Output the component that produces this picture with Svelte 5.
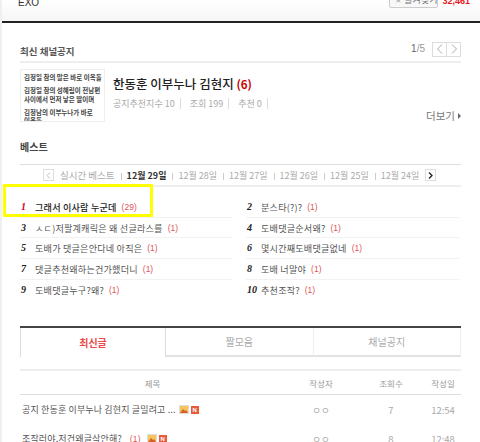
<script>
  const tabs = ['12월 28일','12월 27일','12월 26일','12월 25일','12월 24일'];
  const best = [
    [1,'그래서 이사람 누군데','(29)'],[2,'분스타(?)?','(1)'],
    [3,'ㅅㄷ)저팔계캐릭은 왜 선글라스를','(1)'],[4,'도배댓글순서왜?','(1)'],
    [5,'도배가 댓글은안다네 아직은','(1)'],[6,'몇시간째도배댓글없네','(1)'],
    [7,'댓글추천왜하는건가했더니','(1)'],[8,'도배 너말야','(1)'],
    [9,'도배댓글누구?왜?','(1)'],[10,'추천조작?','(1)']
  ];
  const rows = [
    {t:'공지 한동훈 이부누나 김현지 글밀려고 ...',c:'',u:'ㅇㅇ',v:'7',d:'12:54'},
    {t:'조작러야,저건왜글삭안해?',c:'(1)',u:'ㅇㅇ',v:'8',d:'12:48'}
  ];
</script>

<div class="page">
  <header class="top">
    <span class="exo">EXO</span>
    <div class="fav">
      <button class="star"><svg width="10" height="10" viewBox="0 0 10 10"><path d="M5 0l1.400 3.200 3.400.3-2.600 2.200.8 3.300L5 7.300 2 9l.8-3.300L.2 3.500l3.400-.3z" fill="#bbb"/></svg><span>즐겨찾기</span></button>
      <b>32,461</b>
    </div>
  </header>

  <main class="content">
    <section class="notice">
      <div class="head">
        <h2>최신 채널공지</h2>
        <div class="pager">
          <span class="count"><b>1</b>/5</span>
          <div class="arrows">
            <span><svg width="8" height="10" viewBox="0 0 8 10"><path d="M6 .5L1.500 5 6 9.500" fill="none" stroke="#aaa"/></svg></span>
            <span><svg width="8" height="10" viewBox="0 0 8 10"><path d="M2 .5L6.500 5 2 9.500" fill="none" stroke="#aaa"/></svg></span>
          </div>
        </div>
      </div>
      <div class="card">
        <div class="thumb">
          <p>김정일 참의 말은 바로 이옥돌</p>
          <p>김정일 참의 성혜림이 전남편<br>사이에서 먼저 낳은 딸이며</p>
          <p>김정남의 이부누나가 바로<br>이옥돌</p>
        </div>
        <div class="info">
          <div class="title">한동훈 이부누나 김현지 <b>(6)</b></div>
          <div class="meta"><span>공지추천지수 10</span><span>조회 199</span><span>추천 0</span></div>
        </div>
      </div>
      <div class="more">더보기<i></i></div>
    </section>

    <section class="best">
      <h3>베스트</h3>
      <nav class="days">
        <span class="sq"><svg width="5" height="7" viewBox="0 0 5 7"><path d="M4 .5L1 3.500 4 6.500" fill="none" stroke="#bbb"/></svg></span>
        <span class="day">실시간 베스트</span>
        <span class="day on">12월 29일</span>
        {#each tabs as t}<span class="day date">{t}</span>{/each}
        <span class="sq dark"><svg width="5" height="7" viewBox="0 0 5 7"><path d="M1 .5L4 3.500 1 6.500" fill="none" stroke="#222" stroke-width="1.300"/></svg></span>
      </nav>
      <ol class="list">
        {#each best as [n,t,c]}
          <li class:first={n===1}><em>{n}</em><span class="txt">{t}</span><span class="cm">{c}</span></li>
        {/each}
      </ol>
      <div class="mark"></div>
    </section>

    <section class="board">
      <div class="btabs">
        <div class="btab active">최신글</div>
        <div class="btab">짤모음</div>
        <div class="btab">채널공지</div>
      </div>
      <div class="thead">
        <span class="c1">제목</span><span class="c2">작성자</span><span class="c3">조회수</span><span class="c4">작성일</span>
      </div>
      {#each rows as r}
        <div class="row">
          <span class="c1 subject">{r.t}{#if r.c}<span class="cm rc">{r.c}</span>{/if}
            <svg class="ic" width="10" height="9" viewBox="0 0 10 9"><rect width="10" height="9" fill="#ddd"/><rect x="1" y="1" width="8" height="7" fill="#f6c65a"/><path d="M1 8l3-4 2 2 1-1 2 3z" fill="#d2632a"/></svg>
            <span class="new">N</span>
          </span>
          <span class="c2">ㅇㅇ</span><span class="c3">{r.v}</span><span class="c4">{r.d}</span>
        </div>
      {/each}
    </section>
  </main>
</div>

<style>
  :global(body) { margin: 0; background: #fff; }
  .page {
    width: 480px; height: 442px; overflow: hidden; box-sizing: border-box;
    border-left: 2px solid #f0f0f0;
    font-family: "Noto Sans CJK KR", "Noto Sans", sans-serif;
    font-size: 10px; color: #555;
  }
  .top {
    height: 21px; box-sizing: content-box; border-bottom: 2px solid #222;
    display: flex; justify-content: space-between; align-items: flex-start;
    padding: 0 10px 0 16px;
    background: linear-gradient(#fff, #f6f6f6);
  }
  .exo { font: 10px/1 "Liberation Sans", sans-serif; color: #333; margin-top: -2px; }
  .fav { display: flex; gap: 4px; margin-top: -9px; align-items: center; }
  .star {
    display: flex; align-items: center; gap: 2px; width: 49px; height: 17px; padding: 0 0 0 5px; box-sizing: border-box;
    border: 1px solid #ccc; border-radius: 2px; background: #f8f8f8; white-space: nowrap;
    font: 9px/1 "Noto Sans CJK KR", sans-serif; color: #777;
  }
  .fav b { color: #e8141c; font: bold 9px/1 "Liberation Sans", sans-serif; margin-top: 3px; }

  .content { padding: 0 19px 0 18px; }
  .head {
    margin-top: 17px; height: 21px; border-bottom: 2px solid #eee;
    display: flex; justify-content: space-between; align-items: center;
  }
  h2 { margin: 0; font-size: 9.500px; font-weight: 700; line-height: 16px; color: #555; padding-top: 1px; }
  .pager { display: flex; align-items: center; gap: 7px; margin-top: -3px; }
  .count { font: 10px/1 "Liberation Sans", sans-serif; color: #999; }
  .count b { color: #666; font-weight: 400; }
  .arrows { display: flex; border: 1px solid #ddd; }
  .arrows span { width: 13px; height: 13px; display: flex; align-items: center; justify-content: center; }
  .arrows span + span { border-left: 1px solid #ddd; }

  .card { display: flex; gap: 8px; margin-top: 6px; }
  .thumb {
    width: 85px; height: 53px; overflow: hidden; box-sizing: border-box; padding: 3px 3px;
    border: 1px solid #eee;
    font-size: 6.500px; line-height: 8.500px; font-weight: 700; color: #444; white-space: nowrap;
  }
  .thumb p { margin: 0 0 4.500px; }
  .title { font-size: 12.500px; line-height: 20px; color: #222; margin-top: 5px; font-weight: 500; white-space: nowrap; }
  .title b { color: #c00; font-weight: 700; font-size: 11.500px; }
  .meta { display: flex; margin-top: 4px; font-size: 9px; line-height: 11px; color: #aaa; }
  .meta span { padding-right: 5px; margin-right: 9px; border-right: 1px solid #ddd; }
  .more {
    display: flex; justify-content: flex-end; align-items: center; gap: 3px;
    margin-top: -13px; font-size: 10.500px; line-height: 14px; color: #777;
  }
  .more i { width: 0; height: 0; border-left: 3px solid #666; border-top: 3px solid transparent; border-bottom: 3px solid transparent; }

  .best { position: relative; }
  h3 {
    margin: 17px 0 0; font-size: 10px; line-height: 14px; font-weight: 700; color: #444;
  }
  .days {
    margin-top: 10px; height: 20px; border-top: 1px solid #ddd; border-bottom: 2px solid #eee;
    display: flex; align-items: center; padding-left: 23px; white-space: nowrap;
  }
  .sq {
    width: 9px; height: 10px; border: 1px solid #ddd; display: flex; align-items: center; justify-content: center; box-sizing: content-box; margin-right: 0; flex: none;
  }
  .sq.dark { margin: 0 0 0 0; }
  .day { font-size: 9.500px; color: #aaa; padding: 0 6px; position: relative; }
  .day.on, .day.date { font-size: 9px; }
  .day + .day::before {
    content: ""; position: absolute; left: 0; top: 4px; height: 7px; border-left: 1px solid #ccc;
  }
  .day.on { color: #333; font-weight: 700; }
  .list {
    list-style: none; margin: 10px 0 0; padding: 0;
    display: grid; grid-template-columns: 212px 213px; column-gap: 14px; height: 129px; align-content: start;
  }
  .list li {
    height: 20.700px; box-sizing: border-box; border-bottom: 1px solid #f2f2f2;
    display: flex; align-items: center; font-size: 9.100px; color: #555; white-space: nowrap;
  }
  .list li:nth-last-child(-n+2) { border-bottom: 0; }
  .list em {
    width: 15px; padding-left: 1px; box-sizing: border-box; font: italic bold 10px/1 "Liberation Serif", serif; color: #222; flex: none;
  }
  .list li.first em { color: #d8001c; }
  .list li.first .txt { color: #222; font-weight: 500; }
  .txt { letter-spacing: .2px; }
  .cm { color: #e0565c; margin-left: 5px; font-size: 8.500px; font-family: "Liberation Sans", sans-serif; }
  .mark {
    position: absolute; left: -17px; top: 44px; width: 150px; height: 33px;
    box-sizing: border-box; border: 3px solid #ffff00;
  }

  .btabs { display: flex; height: 29px; border-top: 2px solid #444; }
  .btab {
    flex: 1; display: flex; align-items: center; justify-content: center; box-sizing: border-box;
    font-size: 10px; color: #aaa; border-bottom: 2px solid #e2e2e2; border-right: 1px solid #eee;
  }
  .btab.active {
    color: #ec4a4a; font-weight: 700; border-bottom: 0; border-left: 1px solid #ddd; border-right: 1px solid #ddd; flex: 0 0 146px;
  }
  .thead {
    margin-top: 12px; height: 23px; border-top: 2px solid #eee; border-bottom: 1px solid #ddd;
    display: flex; align-items: center; font-size: 8.500px; color: #999;
  }
  .c1 { flex: 1; text-align: center; min-width: 0; }
  .c2 { width: 72px; text-align: center; }
  .c3 { width: 68px; text-align: center; }
  .c4 { width: 36px; text-align: center; }
  .row {
    height: 29px; display: flex; align-items: center; font-size: 9.500px; color: #aaa;
  }
  .subject { text-align: left; padding-left: 2px; color: #555; font-size: 9px; letter-spacing: .15px; white-space: nowrap; display: flex; align-items: center; }
  .rc { margin: 0 3px 0 8px; }
  .ic { margin-left: 3px; flex: none; }
  .new {
    width: 8px; height: 8px; background: #e85a3a; color: #fff; font: bold 6px/8px "Liberation Sans", sans-serif; text-align: center; margin-left: 2px; letter-spacing: 0;
  }
</style>
